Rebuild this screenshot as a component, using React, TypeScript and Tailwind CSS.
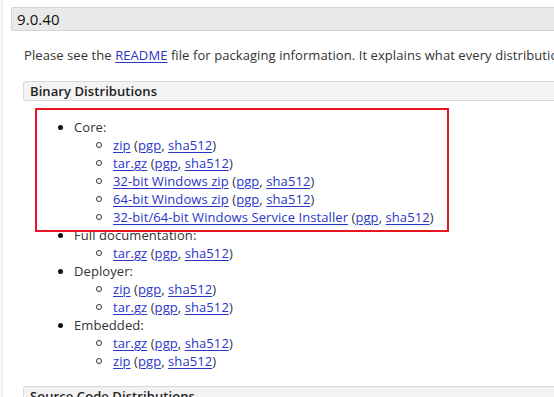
import React from 'react';

type Sub = { label: string };
type Group = { title: string; items: Sub[] };

const groups: Group[] = [
  {
    title: 'Core:',
    items: [
      { label: 'zip' },
      { label: 'tar.gz' },
      { label: '32-bit Windows zip' },
      { label: '64-bit Windows zip' },
      { label: '32-bit/64-bit Windows Service Installer' },
    ],
  },
  { title: 'Full documentation:', items: [{ label: 'tar.gz' }] },
  { title: 'Deployer:', items: [{ label: 'zip' }, { label: 'tar.gz' }] },
  { title: 'Embedded:', items: [{ label: 'tar.gz' }, { label: 'zip' }] },
];

function Link({ children }: { children: React.ReactNode }) {
  return <a className="text-[#2b35c8] underline underline-offset-[2px] decoration-1">{children}</a>;
}

export default function App() {
  return (
    <div
      className="relative flex min-h-[397px] w-[554px] overflow-hidden bg-white text-[13px] leading-[18px] tracking-[0.08px] text-[#333]"
      style={{ fontFamily: '"Open Sans", "Noto Sans", sans-serif' }}
    >
      {/* left page edge */}
      <div className="w-[3px] shrink-0 border-r border-[#ececec] bg-[#f7f7f7]" />

      <div className="flex-1 pl-[8px] pt-[7px]">
        <div className="h-[24px] rounded-l-[3px] border border-r-0 border-[#d4d4d4] bg-[#e9e9e9] pl-[5px] text-[15px] leading-[22px] text-[#111]">
          9.0.40
        </div>

        <div className="pl-[12px]">
          <p className="mt-[15px] whitespace-nowrap pl-[1px]">
            Please see the <Link>README</Link> file for packaging information. It explains what every distribution contains.
          </p>

          <div className="mt-[17px] h-[20px] rounded-l-[3px] border border-r-0 border-[#d8d8d8] bg-[#f3f3f3] pl-[6px] font-semibold leading-[18px] text-[#222]">
            Binary Distributions
          </div>

          <ul className="mt-[17px]">
            {groups.map((g) => (
              <li key={g.title}>
                <div className="flex items-center pl-[35px]">
                  <span className="mr-[11px] h-[5px] w-[5px] rounded-full bg-[#111]" />
                  <span>{g.title}</span>
                </div>
                <ul>
                  {g.items.map((it, i) => (
                    <li key={i} className="flex items-center pl-[73px]">
                      <span className="mr-[11px] h-[6px] w-[6px] rounded-full border border-[#333]" />
                      <span className="whitespace-nowrap">
                        <Link>{it.label}</Link> (<Link>pgp</Link>, <Link>sha512</Link>)
                      </span>
                    </li>
                  ))}
                </ul>
              </li>
            ))}
          </ul>

          <div className="mt-[16px] h-[20px] rounded-l-[3px] border border-r-0 border-[#d8d8d8] bg-[#f3f3f3] pl-[6px] font-semibold leading-[18px] text-[#222]">
            Source Code Distributions
          </div>
        </div>
      </div>

      {/* red annotation box */}
      <div className="pointer-events-none absolute left-[35px] top-[108px] h-[124px] w-[414px] border-2 border-[#e8141f]" />
    </div>
  );
}
